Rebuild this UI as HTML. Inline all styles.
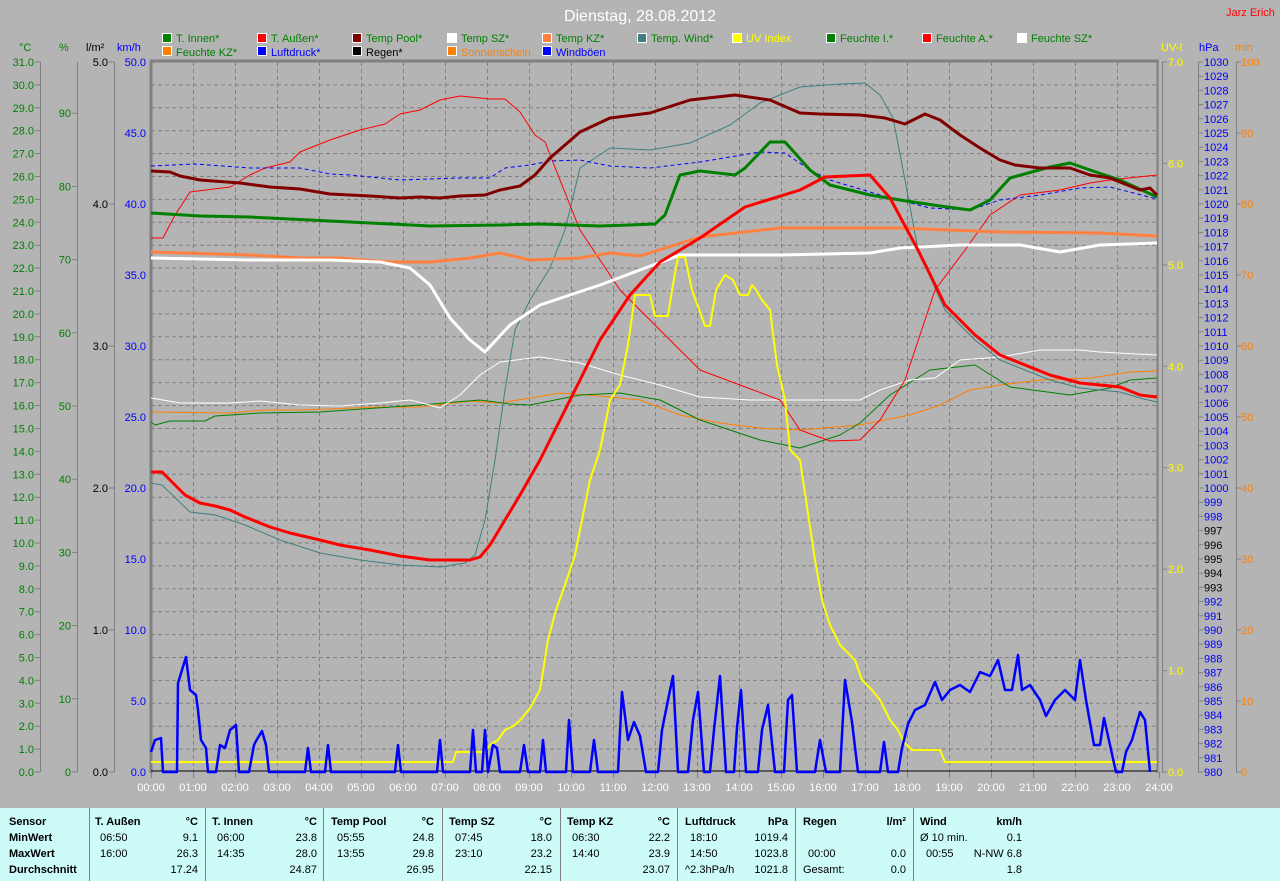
<!DOCTYPE html>
<html><head><meta charset="utf-8">
<style>
html,body{margin:0;padding:0;background:#b4b4b4;}
body{width:1280px;height:881px;overflow:hidden;position:relative;font-family:"Liberation Sans",sans-serif;}
svg{position:absolute;left:0;top:0;}
svg text{font-family:"Liberation Sans",sans-serif;font-size:11px;}
.tbl{position:absolute;left:0;top:808px;width:1280px;height:73px;background:#ccfbf8;}
.tbl div{position:absolute;font-size:11px;color:#000;white-space:nowrap;}
.b{font-weight:bold;}
.sep{position:absolute;top:0;width:1px;height:73px;background:#808080;}
.r{text-align:right;}
</style></head><body>
<svg width="1280" height="808" viewBox="0 0 1280 808">
<!-- title -->
<text x="640" y="21" fill="#fff" text-anchor="middle" style="font-size:16px">Dienstag, 28.08.2012</text>
<text x="1226" y="16" fill="#ff0000">Jarz Erich</text>
<!-- legend -->
<g stroke="#fff" stroke-width="1">
<rect x="162.5" y="33.5" width="9" height="9" fill="#008000"/>
<rect x="257.5" y="33.5" width="9" height="9" fill="#ff0000"/>
<rect x="352.5" y="33.5" width="9" height="9" fill="#800000"/>
<rect x="447.5" y="33.5" width="9" height="9" fill="#ffffff"/>
<rect x="542.5" y="33.5" width="9" height="9" fill="#ff8040"/>
<rect x="637.5" y="33.5" width="9" height="9" fill="#408080"/>
<rect x="732.5" y="33.5" width="9" height="9" fill="#ffff00"/>
<rect x="826.5" y="33.5" width="9" height="9" fill="#008000"/>
<rect x="922.5" y="33.5" width="9" height="9" fill="#ff0000"/>
<rect x="1017.5" y="33.5" width="9" height="9" fill="#ffffff"/>
<rect x="162.5" y="46.5" width="9" height="9" fill="#ff8000"/>
<rect x="257.5" y="46.5" width="9" height="9" fill="#0000ff"/>
<rect x="352.5" y="46.5" width="9" height="9" fill="#000000"/>
<rect x="447.5" y="46.5" width="9" height="9" fill="#ff8000"/>
<rect x="542.5" y="46.5" width="9" height="9" fill="#0000ff"/>
</g>
<g fill="#008000">
<text x="176" y="42">T. Innen*</text>
<text x="271" y="42">T. Außen*</text>
<text x="366" y="42">Temp Pool*</text>
<text x="461" y="42">Temp SZ*</text>
<text x="556" y="42">Temp KZ*</text>
<text x="651" y="42">Temp. Wind*</text>
<text x="840" y="42">Feuchte I.*</text>
<text x="936" y="42">Feuchte A.*</text>
<text x="1031" y="42">Feuchte SZ*</text>
<text x="176" y="56">Feuchte KZ*</text>
</g>
<text x="746" y="42" fill="#ffff00">UV Index</text>
<text x="271" y="56" fill="#0000ff">Luftdruck*</text>
<text x="366" y="56" fill="#000">Regen*</text>
<text x="461" y="56" fill="#ff8000">Sonnenschein</text>
<text x="556" y="56" fill="#0000ff">Windböen</text>

<!-- axis headers -->
<text x="19" y="51" fill="#008000">°C</text>
<text x="59" y="51" fill="#008000">%</text>
<text x="86" y="51" fill="#000">l/m²</text>
<text x="117" y="51" fill="#0000ff">km/h</text>
<text x="1161" y="51" fill="#ffff00">UV-I</text>
<text x="1199" y="51" fill="#0000ff">hPa</text>
<text x="1235" y="51" fill="#ff8000">min</text>

<!-- grid -->
<g stroke="#808080" stroke-width="1" stroke-dasharray="4,3">
<path d="M151 84.9H1157M151 107.8H1157M151 130.7H1157M151 153.6H1157M151 176.5H1157M151 199.4H1157M151 222.3H1157M151 245.2H1157M151 268.1H1157M151 291H1157M151 313.9H1157M151 336.8H1157M151 359.7H1157M151 382.6H1157M151 405.5H1157M151 428.5H1157M151 451.4H1157M151 474.3H1157M151 497.2H1157M151 520.1H1157M151 543H1157M151 565.9H1157M151 588.8H1157M151 611.7H1157M151 634.6H1157M151 657.5H1157M151 680.4H1157M151 703.3H1157M151 726.2H1157M151 749.1H1157"/>
<path d="M193.5 62V772M235.5 62V772M277.5 62V772M319.5 62V772M361.5 62V772M403.5 62V772M445.5 62V772M487.5 62V772M529.5 62V772M571.5 62V772M613.5 62V772M655.5 62V772M697.5 62V772M739.5 62V772M781.5 62V772M823.5 62V772M865.5 62V772M907.5 62V772M949.5 62V772M991.5 62V772M1033.5 62V772M1075.5 62V772M1117.5 62V772"/>
</g>
<!-- frame -->
<g stroke="#808080" fill="none">
<path d="M150 61H1159" stroke-width="3"/>
<path d="M151 61V773" stroke-width="3"/>
<path d="M1157.5 61V773" stroke-width="2"/>
<path d="M40.5 62V772M77.5 62V772M114.5 62V772M1162.5 62V772M1198.5 62V772M1236.5 62V772" stroke-width="1"/>
<path d="M193.5 772V778M235.5 772V778M277.5 772V778M319.5 772V778M361.5 772V778M403.5 772V778M445.5 772V778M487.5 772V778M529.5 772V778M571.5 772V778M613.5 772V778M655.5 772V778M697.5 772V778M739.5 772V778M781.5 772V778M823.5 772V778M865.5 772V778M907.5 772V778M949.5 772V778M991.5 772V778M1033.5 772V778M1075.5 772V778M1117.5 772V778M1159.5 772V778M151.5 772V778"/>
</g>

<!-- left °C axis -->
<g stroke="#808080"><path d="M35 62H40M35 84.9H40M35 107.8H40M35 130.7H40M35 153.6H40M35 176.5H40M35 199.4H40M35 222.3H40M35 245.2H40M35 268.1H40M35 291H40M35 313.9H40M35 336.8H40M35 359.7H40M35 382.6H40M35 405.5H40M35 428.5H40M35 451.4H40M35 474.3H40M35 497.2H40M35 520.1H40M35 543H40M35 565.9H40M35 588.8H40M35 611.7H40M35 634.6H40M35 657.5H40M35 680.4H40M35 703.3H40M35 726.2H40M35 749.1H40M35 772H40"/>
<path d="M72 113.2H77M72 186.4H77M72 259.6H77M72 332.8H77M72 406H77M72 479.2H77M72 552.4H77M72 625.6H77M72 698.8H77M72 772H77"/>
<path d="M109 62H114M109 204H114M109 346H114M109 488H114M109 630H114M109 772H114"/>
<path d="M1162 62H1167M1162 163.4H1167M1162 264.9H1167M1162 366.3H1167M1162 467.7H1167M1162 569.1H1167M1162 670.6H1167M1162 772H1167"/>
<path d="M1236 62H1241M1236 133H1241M1236 204H1241M1236 275H1241M1236 346H1241M1236 417H1241M1236 488H1241M1236 559H1241M1236 630H1241M1236 701H1241M1236 772H1241"/>
</g>
<g fill="#008000" text-anchor="end">
<text x="34" y="66">31.0</text><text x="34" y="88.9">30.0</text><text x="34" y="111.8">29.0</text><text x="34" y="134.7">28.0</text><text x="34" y="157.6">27.0</text><text x="34" y="180.5">26.0</text><text x="34" y="203.4">25.0</text><text x="34" y="226.3">24.0</text><text x="34" y="249.2">23.0</text><text x="34" y="272.1">22.0</text><text x="34" y="295">21.0</text><text x="34" y="317.9">20.0</text><text x="34" y="340.8">19.0</text><text x="34" y="363.7">18.0</text><text x="34" y="386.6">17.0</text><text x="34" y="409.5">16.0</text><text x="34" y="432.5">15.0</text><text x="34" y="455.4">14.0</text><text x="34" y="478.3">13.0</text><text x="34" y="501.2">12.0</text><text x="34" y="524.1">11.0</text><text x="34" y="547">10.0</text><text x="34" y="569.9">9.0</text><text x="34" y="592.8">8.0</text><text x="34" y="615.7">7.0</text><text x="34" y="638.6">6.0</text><text x="34" y="661.5">5.0</text><text x="34" y="684.4">4.0</text><text x="34" y="707.3">3.0</text><text x="34" y="730.2">2.0</text><text x="34" y="753.1">1.0</text><text x="34" y="776">0.0</text>
<text x="71" y="117.2">90</text><text x="71" y="190.4">80</text><text x="71" y="263.6">70</text><text x="71" y="336.8">60</text><text x="71" y="410">50</text><text x="71" y="483.2">40</text><text x="71" y="556.4">30</text><text x="71" y="629.6">20</text><text x="71" y="702.8">10</text><text x="71" y="776">0</text>
</g>
<g fill="#000" text-anchor="end">
<text x="108" y="66">5.0</text><text x="108" y="208">4.0</text><text x="108" y="350">3.0</text><text x="108" y="492">2.0</text><text x="108" y="634">1.0</text><text x="108" y="776">0.0</text>
</g>
<g fill="#0000ff" text-anchor="end">
<text x="146" y="66">50.0</text><text x="146" y="137">45.0</text><text x="146" y="208">40.0</text><text x="146" y="279">35.0</text><text x="146" y="350">30.0</text><text x="146" y="421">25.0</text><text x="146" y="492">20.0</text><text x="146" y="563">15.0</text><text x="146" y="634">10.0</text><text x="146" y="705">5.0</text><text x="146" y="776">0.0</text>
</g>
<g fill="#ffff00">
<text x="1168" y="66">7.0</text><text x="1168" y="167.4">6.0</text><text x="1168" y="268.9">5.0</text><text x="1168" y="370.3">4.0</text><text x="1168" y="471.7">3.0</text><text x="1168" y="573.1">2.0</text><text x="1168" y="674.6">1.0</text><text x="1168" y="776">0.0</text>
</g>
<g fill="#ff8000">
<text x="1241" y="66">100</text><text x="1241" y="137">90</text><text x="1241" y="208">80</text><text x="1241" y="279">70</text><text x="1241" y="350">60</text><text x="1241" y="421">50</text><text x="1241" y="492">40</text><text x="1241" y="563">30</text><text x="1241" y="634">20</text><text x="1241" y="705">10</text><text x="1241" y="776">0</text>
</g>
<!-- hPa -->
<g stroke="#808080"><path d="M1198 62H1203M1198 76.2H1203M1198 90.4H1203M1198 104.6H1203M1198 118.8H1203M1198 133H1203M1198 147.2H1203M1198 161.4H1203M1198 175.6H1203M1198 189.8H1203M1198 204H1203M1198 218.2H1203M1198 232.4H1203M1198 246.6H1203M1198 260.8H1203M1198 275H1203M1198 289.2H1203M1198 303.4H1203M1198 317.6H1203M1198 331.8H1203M1198 346H1203M1198 360.2H1203M1198 374.4H1203M1198 388.6H1203M1198 402.8H1203M1198 417H1203M1198 431.2H1203M1198 445.4H1203M1198 459.6H1203M1198 473.8H1203M1198 488H1203M1198 502.2H1203M1198 516.4H1203M1198 530.6H1203M1198 544.8H1203M1198 559H1203M1198 573.2H1203M1198 587.4H1203M1198 601.6H1203M1198 615.8H1203M1198 630H1203M1198 644.2H1203M1198 658.4H1203M1198 672.6H1203M1198 686.8H1203M1198 701H1203M1198 715.2H1203M1198 729.4H1203M1198 743.6H1203M1198 757.8H1203M1198 772H1203"/></g>
<g fill="#0000ff" style="font-size:10.5px">
<text x="1204" y="66">1030</text><text x="1204" y="80.2">1029</text><text x="1204" y="94.4">1028</text><text x="1204" y="108.6">1027</text><text x="1204" y="122.8">1026</text><text x="1204" y="137">1025</text><text x="1204" y="151.2">1024</text><text x="1204" y="165.4">1023</text><text x="1204" y="179.6">1022</text><text x="1204" y="193.8">1021</text><text x="1204" y="208">1020</text><text x="1204" y="222.2">1019</text><text x="1204" y="236.4">1018</text><text x="1204" y="250.6">1017</text><text x="1204" y="264.8">1016</text><text x="1204" y="279">1015</text><text x="1204" y="293.2">1014</text><text x="1204" y="307.4">1013</text><text x="1204" y="321.6">1012</text><text x="1204" y="335.8">1011</text><text x="1204" y="350">1010</text><text x="1204" y="364.2">1009</text><text x="1204" y="378.4">1008</text><text x="1204" y="392.6">1007</text><text x="1204" y="406.8">1006</text><text x="1204" y="421">1005</text><text x="1204" y="435.2">1004</text><text x="1204" y="449.4">1003</text><text x="1204" y="463.6">1002</text><text x="1204" y="477.8">1001</text><text x="1204" y="492">1000</text><text x="1204" y="506.2">999</text><text x="1204" y="520.4">998</text><text x="1204" y="534.6" fill="#000">997</text><text x="1204" y="548.8" fill="#000">996</text><text x="1204" y="563" fill="#000">995</text><text x="1204" y="577.2" fill="#000">994</text><text x="1204" y="591.4" fill="#000">993</text><text x="1204" y="605.6">992</text><text x="1204" y="619.8">991</text><text x="1204" y="634">990</text><text x="1204" y="648.2">989</text><text x="1204" y="662.4">988</text><text x="1204" y="676.6">987</text><text x="1204" y="690.8">986</text><text x="1204" y="705">985</text><text x="1204" y="719.2">984</text><text x="1204" y="733.4">983</text><text x="1204" y="747.6">982</text><text x="1204" y="761.8">981</text><text x="1204" y="776">980</text>
</g>
<!-- hours -->
<g fill="#fff" text-anchor="middle">
<text x="151" y="791">00:00</text><text x="193" y="791">01:00</text><text x="235" y="791">02:00</text><text x="277" y="791">03:00</text><text x="319" y="791">04:00</text><text x="361" y="791">05:00</text><text x="403" y="791">06:00</text><text x="445" y="791">07:00</text><text x="487" y="791">08:00</text><text x="529" y="791">09:00</text><text x="571" y="791">10:00</text><text x="613" y="791">11:00</text><text x="655" y="791">12:00</text><text x="697" y="791">13:00</text><text x="739" y="791">14:00</text><text x="781" y="791">15:00</text><text x="823" y="791">16:00</text><text x="865" y="791">17:00</text><text x="907" y="791">18:00</text><text x="949" y="791">19:00</text><text x="991" y="791">20:00</text><text x="1033" y="791">21:00</text><text x="1075" y="791">22:00</text><text x="1117" y="791">23:00</text><text x="1159" y="791">24:00</text>
</g>

<!-- curves -->
<g fill="none" stroke-linejoin="round">
<!-- thin orange Feuchte KZ -->
<polyline stroke="#ff8000" stroke-width="1" points="151,412 230,413 265,410 300,410 380,407 420,407 445,404 470,401 500,403 530,398 560,393 600,396 640,400 680,415 720,423 760,428 800,430 860,425 910,415 940,405 970,390 1000,385 1040,380 1090,378 1130,372 1157,371"/>
<!-- thin green Feuchte I -->
<polyline stroke="#008000" stroke-width="1" points="151,422 155,425 170,421 205,421 215,416 260,413 320,412 420,405 480,400 510,404 530,405 580,395 620,393 660,400 700,420 760,440 800,448 840,435 860,423 890,395 930,370 975,365 1010,387 1040,391 1070,395 1110,388 1130,380 1157,378"/>
<!-- thin white Feuchte SZ -->
<polyline stroke="#ffffff" stroke-width="1" points="151,398 180,403 230,403 260,401 300,405 340,406 380,403 410,400 430,405 440,408 460,395 480,375 500,362 540,357 580,363 620,375 660,385 700,397 750,400 800,400 860,400 880,390 910,380 935,378 960,360 1000,357 1040,350 1080,350 1100,352 1157,355"/>
<!-- teal Temp Wind -->
<polyline stroke="#408080" stroke-width="1" points="151,483 162,485 190,512 215,515 245,525 280,540 320,553 360,560 400,565 440,567 465,563 475,555 485,520 495,460 505,390 515,330 530,300 550,268 565,230 580,168 610,148 650,150 690,143 730,125 760,103 800,87 840,84 865,83 880,95 893,118 905,180 918,250 945,310 975,340 1000,360 1050,380 1080,388 1120,392 1140,398 1157,402"/>
<!-- thin red Feuchte A -->
<polyline stroke="#ff0000" stroke-width="1" points="151,238 163,238 175,215 190,192 230,187 250,175 265,168 290,162 300,152 330,140 360,130 385,124 400,114 420,110 440,100 460,96 490,99 505,99 520,112 535,135 545,142 560,180 580,230 600,260 620,290 640,310 660,330 700,370 740,385 780,400 800,430 830,441 860,440 880,420 905,380 935,290 965,250 990,215 1020,195 1060,190 1090,183 1110,180 1157,175"/>
<!-- dashed blue Luftdruck -->
<polyline stroke="#0000ff" stroke-width="1" stroke-dasharray="4,3" points="151,166 195,164 250,168 300,168 330,174 350,175 400,180 460,178 490,178 505,168 530,165 550,161 580,160 610,166 650,168 700,162 760,152 785,153 810,170 830,180 880,195 930,208 970,210 1000,200 1040,195 1080,188 1110,187 1157,199"/>
<!-- orange Temp KZ -->
<polyline stroke="#ff8040" stroke-width="3" points="151,252 250,255 300,258 340,258 390,262 430,262 470,258 500,253 530,260 580,258 610,253 640,256 700,237 780,228 900,228 1000,232 1100,233 1157,236"/>
<!-- white Temp SZ -->
<polyline stroke="#ffffff" stroke-width="3" points="151,258 250,260 330,260 380,262 410,268 430,285 450,318 470,340 485,352 510,325 540,305 600,285 640,270 680,255 780,255 870,253 900,248 960,245 1020,245 1060,252 1100,245 1157,243"/>
<!-- green T Innen -->
<polyline stroke="#008000" stroke-width="3" points="151,213 200,216 250,217 350,222 430,226 500,225 540,224 600,226 655,224 665,215 680,175 700,171 735,175 745,168 770,142 785,142 810,170 830,185 870,195 900,200 940,206 970,210 990,200 1010,178 1050,167 1070,163 1090,170 1120,180 1157,197"/>
<!-- dark red Temp Pool -->
<polyline stroke="#800000" stroke-width="3" points="151,171 170,172 180,176 200,180 240,183 270,187 300,189 330,194 370,196 400,198 420,197 440,198 460,196 485,195 500,190 520,186 535,175 550,158 580,132 610,118 650,113 690,100 735,95 770,100 800,113 820,114 860,115 885,118 905,124 925,114 940,120 960,135 980,148 1000,160 1015,165 1040,168 1070,168 1090,175 1110,178 1130,186 1140,190 1150,188 1157,195"/>
<!-- thick red T Außen -->
<polyline stroke="#ff0000" stroke-width="3" points="151,472 162,472 170,480 185,495 200,503 215,506 230,510 245,517 270,527 290,533 320,540 340,545 370,550 400,556 430,560 470,560 480,557 490,545 505,520 520,495 540,460 560,420 580,380 600,340 630,295 660,262 700,238 745,207 800,190 825,177 870,175 890,198 918,250 945,305 975,335 1000,355 1050,375 1080,383 1120,387 1140,395 1157,397"/>
<!-- black regen -->
<path d="M151 771H1157" stroke="#000" stroke-width="1"/>
<!-- yellow UV -->
<polyline stroke="#ffff00" stroke-width="2" points="151,762 453,762 456,752 485,752 490,745 498,740 505,730 515,725 522,718 530,708 540,690 548,640 556,610 565,585 575,555 580,530 590,480 600,450 610,400 620,385 628,345 635,295 650,295 655,316 668,316 672,290 678,257 685,257 692,290 700,312 705,326 710,326 716,290 725,275 733,280 740,295 748,295 752,285 756,290 762,300 770,310 777,365 785,400 790,450 800,460 806,500 815,560 822,600 830,625 840,645 855,660 862,680 872,690 880,700 890,720 898,730 904,742 912,750 940,750 945,762 1157,762"/>
<!-- blue wind -->
<polyline stroke="#0000ff" stroke-width="2.5" points="151,752 155,740 161,738 163,772 177,772 178,683 186,657 190,690 196,695 198,710 201,740 206,748 208,772 216,772 220,745 225,748 230,730 236,725 239,772 249,772 254,745 256,741 262,731 266,745 269,772 305,772 308,748 311,772 325,772 328,745 331,772 395,772 398,745 401,772 437,772 440,740 443,772 470,772 473,730 476,772 482,772 485,730 488,772 493,745 497,748 500,772 520,772 524,745 528,772 540,772 543,740 546,772 566,772 569,720 573,772 590,772 594,740 598,772 618,772 622,692 628,740 634,722 640,736 646,772 658,772 662,730 668,700 673,676 678,772 688,772 693,720 698,692 704,772 710,772 714,730 720,676 726,772 734,772 737,728 741,690 746,772 758,772 762,730 768,705 775,772 784,772 788,700 792,695 797,772 815,772 820,740 826,772 840,772 845,680 852,722 858,772 880,772 884,742 888,772 898,772 902,748 908,724 915,710 925,705 935,682 942,700 950,690 960,685 970,692 980,672 990,676 998,660 1005,690 1012,690 1018,655 1022,690 1030,685 1040,700 1046,716 1055,700 1065,690 1075,700 1080,660 1086,700 1094,745 1100,745 1104,718 1110,745 1116,772 1122,772 1126,752 1132,740 1140,712 1145,720 1150,772"/>
</g>
</svg>

<div class="tbl">
<div class="sep" style="left:89px"></div><div class="sep" style="left:205px"></div><div class="sep" style="left:323px"></div><div class="sep" style="left:442px"></div><div class="sep" style="left:560px"></div><div class="sep" style="left:677px"></div><div class="sep" style="left:795px"></div><div class="sep" style="left:913px"></div>
<div class="b" style="left:9px;top:8px">Sensor</div>
<div class="b" style="left:9px;top:24px">MinWert</div>
<div class="b" style="left:9px;top:40px">MaxWert</div>
<div class="b" style="left:9px;top:56px">Durchschnitt</div>

<div class="b" style="left:95px;top:8px">T. Außen</div><div class="b r" style="right:1082px;top:8px">°C</div>
<div style="left:100px;top:24px">06:50</div><div class="r" style="right:1082px;top:24px">9.1</div>
<div style="left:100px;top:40px">16:00</div><div class="r" style="right:1082px;top:40px">26.3</div>
<div class="r" style="right:1082px;top:56px">17.24</div>

<div class="b" style="left:212px;top:8px">T. Innen</div><div class="b r" style="right:963px;top:8px">°C</div>
<div style="left:217px;top:24px">06:00</div><div class="r" style="right:963px;top:24px">23.8</div>
<div style="left:217px;top:40px">14:35</div><div class="r" style="right:963px;top:40px">28.0</div>
<div class="r" style="right:963px;top:56px">24.87</div>

<div class="b" style="left:331px;top:8px">Temp Pool</div><div class="b r" style="right:846px;top:8px">°C</div>
<div style="left:337px;top:24px">05:55</div><div class="r" style="right:846px;top:24px">24.8</div>
<div style="left:337px;top:40px">13:55</div><div class="r" style="right:846px;top:40px">29.8</div>
<div class="r" style="right:846px;top:56px">26.95</div>

<div class="b" style="left:449px;top:8px">Temp SZ</div><div class="b r" style="right:728px;top:8px">°C</div>
<div style="left:455px;top:24px">07:45</div><div class="r" style="right:728px;top:24px">18.0</div>
<div style="left:455px;top:40px">23:10</div><div class="r" style="right:728px;top:40px">23.2</div>
<div class="r" style="right:728px;top:56px">22.15</div>

<div class="b" style="left:567px;top:8px">Temp KZ</div><div class="b r" style="right:610px;top:8px">°C</div>
<div style="left:572px;top:24px">06:30</div><div class="r" style="right:610px;top:24px">22.2</div>
<div style="left:572px;top:40px">14:40</div><div class="r" style="right:610px;top:40px">23.9</div>
<div class="r" style="right:610px;top:56px">23.07</div>

<div class="b" style="left:685px;top:8px">Luftdruck</div><div class="b r" style="right:492px;top:8px">hPa</div>
<div style="left:690px;top:24px">18:10</div><div class="r" style="right:492px;top:24px">1019.4</div>
<div style="left:690px;top:40px">14:50</div><div class="r" style="right:492px;top:40px">1023.8</div>
<div style="left:685px;top:56px">^2.3hPa/h</div><div class="r" style="right:492px;top:56px">1021.8</div>

<div class="b" style="left:803px;top:8px">Regen</div><div class="b r" style="right:374px;top:8px">l/m²</div>
<div style="left:808px;top:40px">00:00</div><div class="r" style="right:374px;top:40px">0.0</div>
<div style="left:803px;top:56px">Gesamt:</div><div class="r" style="right:374px;top:56px">0.0</div>

<div class="b" style="left:920px;top:8px">Wind</div><div class="b r" style="right:258px;top:8px">km/h</div>
<div style="left:920px;top:24px">Ø 10 min.</div><div class="r" style="right:258px;top:24px">0.1</div>
<div style="left:926px;top:40px">00:55</div><div class="r" style="right:258px;top:40px">N-NW 6.8</div>
<div class="r" style="right:258px;top:56px">1.8</div>
</div>
</body></html>
